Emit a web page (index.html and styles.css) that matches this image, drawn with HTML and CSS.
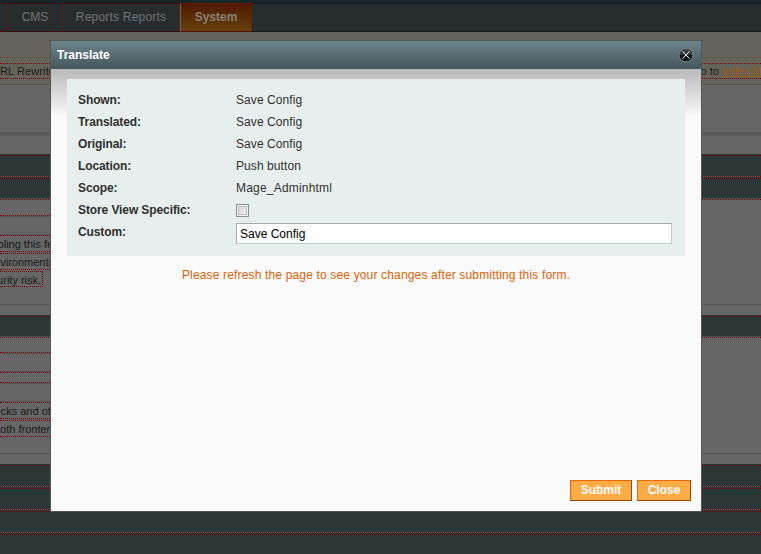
FILE: index.html
```html
<!DOCTYPE html>
<html lang="en">
<head>
<meta charset="utf-8">
<title>Translate</title>
<link rel="stylesheet" href="styles.css">
</head>
<body>
<div class="page">
  <div class="topline"></div>
  <nav class="nav">
    <span class="nav-item nav-first"></span>
    <span class="nav-item cms">CMS</span>
    <span class="nav-item reports">Reports Reports</span>
    <span class="nav-item active">System</span>
  </nav>
  <div class="cream"></div>
  <div class="notice"><span class="notice-left">URL Rewrites</span><span class="notice-right">Go to <a>Index Management</a></span></div>
  <div class="toolbar"></div>
  <div class="gap"></div>
  <div class="bar"></div>
  <div class="bar open"></div>
  <div class="section first">
    <div class="field dot-bottom"></div>
    <div class="field-space"></div>
    <div class="hint"><span class="pull-a">Enabling this feature</span></div>
    <div class="hint"><span class="pull-b">environments</span></div>
    <div class="hint short"><span class="pull-c">security risk.</span></div>
  </div>
  <div class="section-gap"></div>
  <div class="bar open"></div>
  <div class="section second">
    <div class="field dot-bottom"></div>
    <div class="field-space"></div>
    <div class="field middle dot-bottom"></div>
    <div class="field-space"></div>
    <div class="hint"><span class="pull-d">blocks and other</span></div>
    <div class="hint"><span class="pull-e">both frontend</span></div>
  </div>
  <div class="section-gap"></div>
  <div class="bar"></div>
  <div class="bar"></div>
  <div class="bar"></div>
  <div class="bar"></div>
</div>
<div class="dialog">
  <header class="title"><span>Translate</span>
    <svg class="close" width="16" height="16" viewBox="0 0 16 16">
      <defs><linearGradient id="orb" x1="0" y1="0" x2="0" y2="1"><stop offset="0" stop-color="#4b5254"/><stop offset=".48" stop-color="#30383a"/><stop offset=".5" stop-color="#101719"/><stop offset="1" stop-color="#182023"/></linearGradient></defs>
      <circle cx="8" cy="8" r="7" fill="url(#orb)" stroke="#7d8587"/>
      <path d="M4.500 4.500l7 7M11.500 4.500l-7 7" stroke="#fff" stroke-width="1"/>
    </svg>
  </header>
  <div class="content">
    <div class="form">
      <div class="row"><b>Shown:</b><span>Save Config</span></div>
      <div class="row"><b>Translated:</b><span>Save Config</span></div>
      <div class="row"><b>Original:</b><span>Save Config</span></div>
      <div class="row"><b>Location:</b><span>Push button</span></div>
      <div class="row"><b>Scope:</b><span class="scope">Mage_Adminhtml</span></div>
      <div class="row"><b>Store View Specific:</b><i class="check"></i></div>
      <div class="row"><b>Custom:</b><input class="input" type="text" value="Save Config"></div>
    </div>
    <p class="note">Please refresh the page to see your changes after submitting this form.</p>
    <div class="buttons"><button class="submit">Submit</button><button class="dismiss">Close</button></div>
  </div>
</div>
</body>
</html>
```
FILE: styles.css
```css
* { box-sizing: border-box; }
body { margin: 0; font: 12px/16px "Liberation Sans", Arial, sans-serif; color: #2f2f2f; }
.page { height: 554px; overflow: hidden; background: #666; font-size: 11px; color: #1a1a1a; }
.topline { height: 3px; background: #18262a; }
.nav { display: flex; height: 29px; background: #272d2f; border-top: 1px solid #10181a; border-bottom: 1px solid #16191a; font-size: 12px; line-height: 27px; color: #717475; }
.nav-item { border-right: 1px dotted #900; border-top: 1px dotted #600; border-bottom: 1px dotted #600; margin-top: -1px; height: 29px; text-align: center; }
.nav-first { width: 8px; }
.cms { width: 55px; border-right: 1px dotted #a00; }
.reports { width: 117px; letter-spacing: .2px; }
.active { width: 72px; border-left: 1px solid #666; background: linear-gradient(#4f1a00, #66400c); color: #858079; font-weight: bold; }
.cream { height: 26px; background: #66635b; border-bottom: 1px solid #5d564a; }
.notice { display: flex; justify-content: space-between; height: 27px; padding-top: 5px; background: #66635b; border-bottom: 1px solid #5d564a; }
.notice span { height: 16px; line-height: 15px; border-top: 1px dotted #700; border-bottom: 1px dotted #700; white-space: nowrap; }
.notice-left { width: 350px; text-indent: -8px; letter-spacing: .1px; overflow: hidden; }
.notice-right { width: 69px; overflow: hidden; }
.notice a { color: #a05a10; text-decoration: underline; }
.toolbar { height: 51px; border-bottom: 4px solid #5b5b5b; }
.gap { height: 18px; }
.bar { height: 23px; background: linear-gradient(#2c3738, #2c3738) 0 0 / 100% 22px no-repeat; border-bottom: 1px solid #6a6f70; padding-top: 1px; }
.bar::before { content: ""; display: block; height: 20px; border-top: 1px dotted #700; border-bottom: 1px dotted #700; }
.bar.open { height: 22px; border-bottom-color: #484d4e; }
.section { border-bottom: 1px solid #555; }
.first { height: 106px; padding-top: 16px; }
.second { height: 117px; padding-top: 15px; }
.field { width: 60px; height: 2px; border-bottom: 1px solid #555; }
.dot-bottom { border-top: 1px dotted #700; }
.field-space { width: 60px; height: 18px; border-bottom: 1px solid #555; }
.middle { height: 12px; border-top: 1px dotted #700; }
.middle::after { content: ""; display: block; margin-top: 9px; border-bottom: 1px dotted #700; }
.hint { width: 60px; height: 17px; margin-bottom: 1px; border-top: 1px dotted #700; border-bottom: 1px dotted #700; line-height: 16px; white-space: nowrap; overflow: hidden; }
.hint span { display: block; }
.hint.short { width: 43px; height: 16px; border-right: 1px dotted #700; }
.pull-a { margin-left: -22px; }
.pull-b { margin-left: -12px; }
.pull-c { margin-left: -20px; }
.pull-d { margin-left: -14px; }
.pull-e { margin-left: -6px; }
.section-gap { height: 10px; }
.dialog { position: absolute; left: 50px; top: 40px; width: 652px; height: 472px; border: 1px solid #555; background: #fafafa; display: flex; flex-direction: column; }
.title { height: 28px; display: flex; align-items: center; justify-content: space-between; padding: 0 7px 0 6px; background: linear-gradient(#6b848b, #46565b); color: #fff; font-weight: bold; }
.content { flex: 1; display: flex; flex-direction: column; padding: 10px 10px 10px 16px; background: linear-gradient(#b9b9b9, #fafafa 48px); }
.form { width: 618px; height: 177px; padding: 10px 11px; background: #e7efee; }
.row { display: flex; height: 22px; line-height: 22px; }
.row b { width: 158px; letter-spacing: -.1px; }
.row span { letter-spacing: .08px; }
.row .scope { letter-spacing: .2px; }
.check { width: 13px; height: 13px; margin-top: 5px; border: 1px solid #8e8f8f; box-shadow: inset 0 0 0 1px #f4f4f4, inset 0 0 0 2px #b8bcc0; background: linear-gradient(135deg, #cbcfd5, #f6f6f6); }
.input { width: 436px; height: 21px; margin-top: 2px; padding: 0 3px; border: 1px solid #c8c8c8; border-top-color: #aaa; border-left-color: #aaa; background: #fff; font: 12px "Liberation Sans", Arial, sans-serif; color: #000; }
.note { width: 618px; margin: 11px 0 0; text-align: center; color: #df5f05; letter-spacing: .158px; }
.buttons { display: flex; justify-content: flex-end; gap: 5px; margin-top: auto; }
.buttons button { height: 21px; padding: 0 0 1px; background: #ffac47; border: 1px solid #ed6502; border-right-color: #a04300; border-bottom-color: #a04300; color: #fff; font: bold 12px "Liberation Sans", Arial, sans-serif; }
.submit { width: 62px; }
.dismiss { width: 54px; }
```
